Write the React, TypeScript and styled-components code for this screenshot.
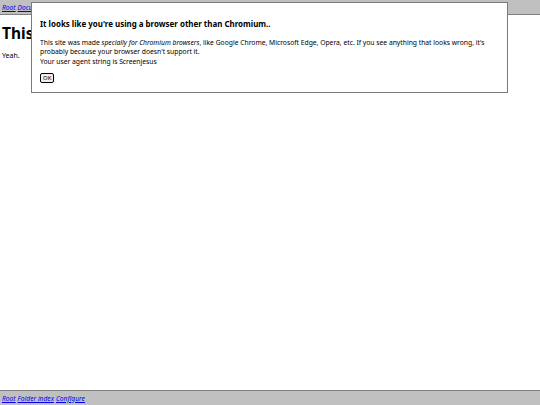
import React from "react";
import styled, { createGlobalStyle } from "styled-components";

const Global = createGlobalStyle`
  html, body { margin: 0; padding: 0; background: #ffffff; }
  body { font-family: "Noto Sans", "Open Sans", sans-serif; font-size: 8px; color: #000; }
  #root { min-height: 405px; }
`;

const Page = styled.div`
  position: relative;
  width: 540px;
  height: 405px;
  display: flex;
  flex-direction: column;
`;

const Bar = styled.nav<{ $bottom?: boolean }>`
  height: 14px;
  background: #c0c0c0;
  ${(p) => (p.$bottom ? "border-top: 1px solid #7f7f7f;" : "border-bottom: 1px solid #7f7f7f;")}
  display: flex;
  align-items: center;
  gap: 2px;
  padding: 0 2px;
  font-size: 6.7px;
`;

const NavLink = styled.a`
  color: #0000ee;
  font-style: italic;
  text-decoration: underline;
`;

const Main = styled.main`
  flex: 1;
  padding: 0 2px;
`;

const Heading = styled.h1`
  font-size: 15.5px;
  line-height: 20px;
  font-weight: 700;
  margin: 8px 0 8px;
`;

const Para = styled.p`
  margin: 0;
  font-size: 7px;
  line-height: 10px;
`;

const Dialog = styled.div`
  position: absolute;
  left: 31px;
  top: 2px;
  width: 459px;
  padding: 8px 8px 9px;
  background: #fff;
  border: 1px solid #7a7a7a;
`;

const DialogTitle = styled.h3`
  font-size: 7.95px;
  line-height: 11px;
  font-weight: 700;
  margin: 8px 0 8px;
`;

const DialogText = styled.p`
  margin: 0;
  font-size: 6.75px;
  line-height: 9.4px;
`;

const OkButton = styled.button`
  display: block;
  margin-top: 7px;
  font-family: inherit;
  font-size: 6px;
  line-height: 8px;
  padding: 0 2px;
  height: 10px;
  border: 1px solid #000;
  border-radius: 2px;
  background: #efefef;
`;

export default function App() {
  return (
    <>
      <Global />
      <Page>
        <Bar>
          <NavLink href="#">Root</NavLink>
          <NavLink href="#">Documents</NavLink>
        </Bar>
        <Main>
          <Heading>This page</Heading>
          <Para>Yeah.</Para>
        </Main>
        <Bar $bottom>
          <NavLink href="#">Root</NavLink>
          <NavLink href="#">Folder index</NavLink>
          <NavLink href="#">Configure</NavLink>
        </Bar>
        <Dialog>
          <DialogTitle>It looks like you're using a browser other than Chromium..</DialogTitle>
          <DialogText>
            This site was made <i>specially for Chromium browsers</i>, like Google Chrome, Microsoft Edge, Opera, etc. If you see anything that looks wrong, it's probably because your browser doesn't support it.
            <br />
            Your user agent string is Screenjesus
          </DialogText>
          <OkButton>OK</OkButton>
        </Dialog>
      </Page>
    </>
  );
}
